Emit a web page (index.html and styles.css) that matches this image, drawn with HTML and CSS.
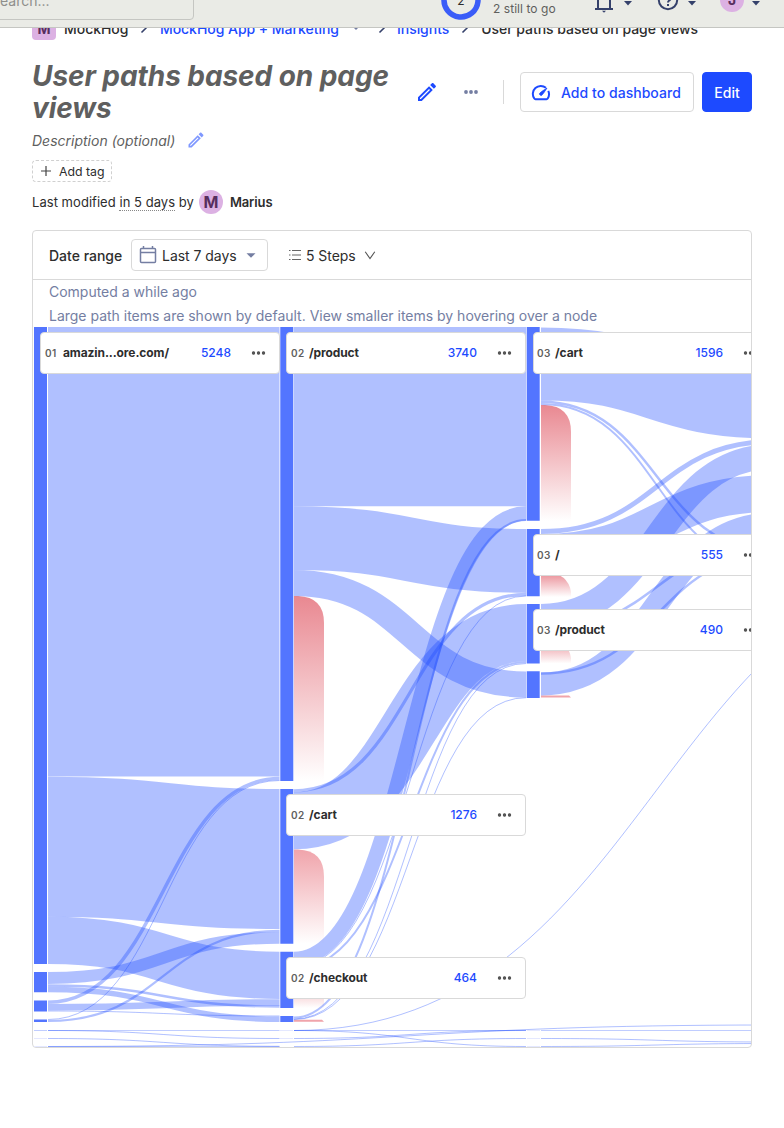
FILE: index.html
```html
<!DOCTYPE html>
<html lang="en">
<head>
<meta charset="utf-8">
<title>User paths based on page views</title>
<link rel="stylesheet" href="styles.css">
</head>
<body>
<header class="topbar">
  <div class="search">Search...</div>
  <div class="progress">
    <svg class="ring" width="40" height="40" viewBox="0 0 40 40"><circle cx="20" cy="20" r="17" fill="none" stroke="#3a5cf8" stroke-width="5.5" stroke-linecap="round" stroke-dasharray="80 27" transform="rotate(-84 20 20)"/><text x="20" y="24.5" text-anchor="middle" class="ring-num">2</text></svg>
    <div class="togo">2 still to go</div>
  </div>
  <div class="tools">
    <svg width="24" height="24" viewBox="0 0 24 24" fill="none" stroke="#35416b" stroke-width="2"><path d="M6 21V11a6 6 0 0 1 12 0v10M3 21h18"/><path d="M10 22.800h4l-2 2z" fill="#35416b" stroke="none"/></svg>
    <svg class="tick" width="10" height="6" viewBox="0 0 10 6"><path d="M1 0h8L5 4.500z" fill="#35416b"/></svg>
    <svg class="help" width="24" height="24" viewBox="0 0 24 24" fill="none" stroke="#35416b" stroke-width="2"><circle cx="12" cy="12" r="9.200"/><path d="M9.200 10a2.800 2.800 0 1 1 4.300 2.300c-1 .7-1.500 1.100-1.500 2.200M12 16v2"/></svg>
    <svg class="tick" width="10" height="6" viewBox="0 0 10 6"><path d="M1 0h8L5 4.500z" fill="#35416b"/></svg>
    <span class="avatar avatar-top">J</span>
    <svg class="tick" width="10" height="6" viewBox="0 0 10 6"><path d="M1 0h8L5 4.500z" fill="#35416b"/></svg>
  </div>
</header>
<main>
  <nav class="crumbs">
    <span class="lettermark">M</span><span class="c1">MockHog</span>
    <svg class="chev s1" width="8" height="12" viewBox="0 0 8 12"><path d="M1.500 1.500 6 6l-4.500 4.500" /></svg>
    <a class="c2">MockHog App + Marketing</a>
    <svg class="caret" width="8" height="5" viewBox="0 0 8 5"><path d="M0 0h8L4 4z" fill="#747ea2"/></svg>
    <svg class="chev s2" width="8" height="12" viewBox="0 0 8 12"><path d="M1.500 1.500 6 6l-4.500 4.500" /></svg>
    <a class="c3">Insights</a>
    <svg class="chev s3" width="8" height="12" viewBox="0 0 8 12"><path d="M1.500 1.500 6 6l-4.500 4.500" /></svg>
    <span class="c4">User paths based on page views</span>
  </nav>
  <div class="title-row">
    <h1>User paths based on page views</h1>
    <svg class="pencil" width="24" height="24" viewBox="0 0 24 24" fill="#1d4aff"><path d="M14.060 9.020l.92.920L5.920 19H5v-.920l9.060-9.060M17.660 3c-.250 0-.510.100-.700.290l-1.830 1.830 3.750 3.750 1.830-1.830c.390-.390.390-1.020 0-1.410l-2.340-2.340c-.200-.200-.450-.290-.710-.290zm-3.600 3.190L3 17.250V21h3.750L17.810 9.940l-3.750-3.750z"/></svg>
    <svg class="more" width="16" height="6" viewBox="0 0 16 6" fill="#747ea2"><circle cx="3" cy="3" r="1.900"/><circle cx="8" cy="3" r="1.900"/><circle cx="13" cy="3" r="1.900"/></svg>
    <span class="rule"></span>
    <button class="btn add"><svg width="20" height="20" viewBox="0 0 20 20" fill="none" stroke="#1d4aff" stroke-width="2"><path d="M14.900 4.700A8 8 0 0 0 3.300 15.500a1.500 1.500 0 0 0 1.200.7h11a1.500 1.500 0 0 0 1.200-.7 8 8 0 0 0 .6-7.600"/><path d="M8.600 11.400c-.7-.9.200-1.700 7.400-6.400-4.700 7.200-5.600 8.100-6.400 7.400z" fill="#1d4aff" stroke-width=".8"/></svg>Add to dashboard</button>
    <button class="btn edit">Edit</button>
  </div>
  <div class="desc">Description (optional)
    <svg width="20" height="20" viewBox="0 0 24 24" fill="#7f98ff"><path d="M14.060 9.020l.92.920L5.920 19H5v-.920l9.060-9.060M17.660 3c-.250 0-.510.100-.700.290l-1.830 1.830 3.750 3.750 1.830-1.830c.390-.390.390-1.020 0-1.410l-2.340-2.340c-.200-.200-.450-.290-.710-.290zm-3.600 3.190L3 17.250V21h3.750L17.810 9.940l-3.750-3.750z"/></svg>
  </div>
  <button class="tag"><svg width="10" height="10" viewBox="0 0 10 10" stroke="#444" stroke-width="1.200"><path d="M5 0v10M0 5h10"/></svg><span>Add tag</span></button>
  <div class="modified"><span>Last modified <span class="when">in 5 days</span> by</span><span class="avatar">M</span><b>Marius</b></div>

  <section class="card">
    <div class="filters">
      <span class="range-label">Date range</span>
      <button class="range"><svg width="18" height="18" viewBox="0 0 18 18" fill="none" stroke="#747ea2" stroke-width="1.500"><rect x="1.500" y="2.500" width="15" height="14" rx="1"/><path d="M1.500 6.500h15M4.500 0v2.500M13.500 0v2.500"/></svg><span>Last 7 days</span><svg class="down" width="10" height="5" viewBox="0 0 10 5"><path d="M.5.300h9L5 4.800z" fill="#747ea2"/></svg></button>
      <span class="steps"><svg width="12" height="12" viewBox="0 0 12 12" stroke="#666" stroke-width="1.100"><path d="M3 1.500h9M3 6h9M3 10.500h9M0 1.500h1.500M0 6h1.500M0 10.500h1.500"/></svg><span>5 Steps</span><svg class="open" width="12" height="9" viewBox="0 0 12 9" fill="none" stroke="#555" stroke-width="1.100"><path d="M1.200.8 6 7.500 10.800.8"/></svg></span>
    </div>
    <div class="note">Computed a while ago</div>
    <div class="note">Large path items are shown by default. View smaller items by hovering over a node</div>
    <div class="canvas">
      <svg class="sankey" width="718" height="720" viewBox="33 327 718 720">
        <defs>
          <linearGradient id="drop" x1="0" y1="0" x2="0" y2="1"><stop offset="0" stop-color="#e98891"/><stop offset="1" stop-color="#fff"/></linearGradient>
          <linearGradient id="soft" x1="0" y1="0" x2="0" y2="1"><stop offset="0" stop-color="#f0a4ab"/><stop offset="1" stop-color="#fff"/></linearGradient>
        </defs>
        <g fill="#5375ff">
          <path d="M34 327h13v637H34zM34 972h13v20.300H34zM34 1000.400h13v11.200H34zM34 1019.400h13v2.600H34z"/>
          <path d="M280.300 327h13v454h-13zM280.300 789h13v154.700h-13zM280.300 951.700h13v56.300h-13zM280.300 1016h13v6h-13z"/>
          <path d="M526.700 327h13v193.800h-13zM526.700 529h13v67.300h-13zM526.700 604h13v59.600h-13zM526.700 671.300h13v26.700h-13z"/>
        </g>
        <g fill="url(#drop)">
          <path d="M294 596h4q26 1 26 27v158h-30z"/>
          <path d="M294 849.500h4q26 1 26 27v67h-30z" fill="url(#soft)"/>
          <path d="M294 972h4q26 1 26 27v9h-30z"/>
          <path d="M541 405h4q26 1 26 27v89h-30z"/>
          <path d="M541 572h4q23 1 26 20v5h-30z"/>
          <path d="M541 638h4q23 1 26 20v5.500h-30z"/>
          <path d="M541 695.500h28l2 2h-30zM294 1019.700h28l2 2h-30z" fill="#f0a4ab"/>
        </g>
        <g fill="none" stroke="#1d4aff" stroke-opacity=".35">
          <path stroke-width="449.500" d="M48 551.750H279.500"/>
          <path stroke-width="140" d="M48 846.700C163.500 846.700 163.500 859 279.500 859"/>
          <path stroke-width="47.300" d="M48 940.300C163.500 940.300 163.500 975.300 279.500 975.300"/>
          <path stroke-width="11.800" d="M48 978C163.500 978 163.500 937.800 279.500 937.800"/>
          <path stroke-width="2.400" d="M48 985.500C163.500 985.500 163.500 1006.500 279.500 1006.500"/>
          <path stroke-width="5.500" d="M48 989.500C163.500 989.500 163.500 1019.200 279.500 1019.200"/>
          <path stroke-width="3.500" d="M48 1002.200C163.500 1002.200 163.500 778.500 279.500 778.500"/>
          <path stroke-width="6.500" d="M48 1007.300C163.500 1007.300 163.500 1002.500 279.500 1002.500"/>
          <path stroke-width="1" d="M48 1011C163.500 1011 163.500 1016 279.500 1016"/>
          <path stroke-width="1" d="M48 1019.500C163.500 1019.500 163.500 780.500 279.500 780.500"/>
          <path stroke-width="2.200" d="M48 1021C163.500 1021 163.500 930.800 279.500 930.800"/>
          <path stroke-width="179.300" d="M294 416.650H526"/>
          <path stroke-width="63.700" d="M294 538.200C410 538.200 410 560.800 526 560.800"/>
          <path stroke-width="26" d="M294 583C410 583 410 684.500 526 684.500"/>
          <path stroke-width="3.200" d="M294 790.800C410 790.800 410 594.300 526 594.300"/>
          <path stroke-width="57" d="M294 820.800C410 820.800 410 632.500 526 632.500"/>
          <path stroke-width="14.500" d="M294 959C410 959 410 513.600 526 513.600"/>
          <path stroke-width="1" d="M294 966.800C410 966.800 410 596 526 596"/>
          <path stroke-width="2" d="M294 969C410 969 410 662 526 662"/>
          <path stroke-width="2" d="M294 1017.500C410 1017.500 410 520 526 520"/>
          <path stroke-width="1" d="M294 1019C410 1019 410 663.500 526 663.500"/>
          <path stroke-width="1" d="M294 1019.500C410 1019.500 410 697.700 526 697.700"/>
          <path stroke-width="73" d="M541 364C657 364 657 402 773 402"/>
          <path stroke-width="2.500" d="M541 401.800C657 401.800 657 551 773 551"/>
          <path stroke-width="1.900" d="M541 404C657 404 657 567 773 567"/>
          <path stroke-width="4.800" d="M541 531.500C657 531.500 657 441.500 773 441.500"/>
          <path stroke-width="37" d="M541 552.500C657 552.500 657 493.500 773 493.500"/>
          <path stroke-width="25" d="M541 616.500C657 616.500 657 456.500 773 456.500"/>
          <path stroke-width="2.500" d="M541 630C657 630 657 543.500 773 543.500"/>
          <path stroke-width="23" d="M541 684C657 684 657 524 773 524"/>
          <path stroke-width="2.500" d="M541 673.500C657 673.500 657 555 773 555"/>
          <path stroke-width="1" d="M294 1030.500C656.500 1030.500 656.500 550 1019 550"/>
          <path stroke-width="1" stroke-opacity=".28" d="M48 1030.500H279.500M294 1030.500H526M541 1030.500H751M34 1030.500h13M48 1046.500H279.500"/>
          <path stroke-width="1" d="M48 1030.500C163.500 1030.500 163.500 1038.500 279.500 1038.500"/>
          <path stroke-width="1" d="M48 1038.500C163.500 1038.500 163.500 1046.300 279.500 1046.300"/>
          <path stroke-width="1" d="M294 1030.500C410 1030.500 410 1046.500 526 1046.500"/>
          <path stroke-width="1" d="M294 1038.500C410 1038.500 410 1030.500 526 1030.500"/>
          <path stroke-width="1" d="M294 1046.500C410 1046.500 410 1038.500 526 1038.500"/>
          <path stroke-width="1" d="M48 1046.500C410 1046.500 410 1025 773 1025"/>
          <path stroke-width="1" d="M541 1038.500C657 1038.500 657 1042 773 1042M541 1046.500C657 1046.500 657 1043.500 773 1043.500"/>
        </g>
        <path d="M34 1038.500h13M280 1030.500h13M280 1038.500h13M527 1030.500h13M527 1038.500h13M34 1046.500h13M527 1046.500h13" stroke="#e4e8ff"/>
      </svg>
      <div class="node n1"><i>01</i><b>amazin...ore.com/</b><em>5248</em><span class="dots"></span></div>
      <div class="node n2"><i>02</i><b>/product</b><em>3740</em><span class="dots"></span></div>
      <div class="node n3"><i>02</i><b>/cart</b><em>1276</em><span class="dots"></span></div>
      <div class="node n4"><i>02</i><b>/checkout</b><em>464</em><span class="dots"></span></div>
      <div class="node n5"><i>03</i><b>/cart</b><em>1596</em><span class="dots"></span></div>
      <div class="node n6"><i>03</i><b>/</b><em>555</em><span class="dots"></span></div>
      <div class="node n7"><i>03</i><b>/product</b><em>490</em><span class="dots"></span></div>
    </div>
  </section>
</main>
</body>
</html>
```
FILE: styles.css
```css
* { box-sizing: border-box; }
body { margin: 0; background: #fff; font-family: Inter, "Liberation Sans", sans-serif; font-size: 14px; line-height: 20px; color: #2d2d2d; height: 1128px; overflow: hidden; }
button { font: inherit; color: inherit; margin: 0; background: #fff; }

.topbar { height: 28px; background: #eaebe6; border-bottom: 1px solid #c5c6c2; overflow: hidden; position: relative; z-index: 2; display: flex; align-items: flex-end; }
.search { width: 204px; height: 40px; margin: 0 0 7px -10px; flex: none; border: 1px solid #c5c6c2; border-radius: 4px; color: #8f8f8c; line-height: 20px; padding: 10px 0 0 0; }
.progress { display: flex; align-items: flex-end; margin-left: 247px; width: 151px; flex: none; }
.ring { display: block; margin-bottom: 7px; }
.ring-num { font-size: 12px; fill: #2d2d2d; }
.togo { font-size: 12px; line-height: 16px; color: #5f5f5d; margin: 0 0 10px 12px; white-space: nowrap; letter-spacing: .05px; }
.tools { display: flex; align-items: flex-end; }
.tools svg { display: block; overflow: visible; margin-bottom: 15px; flex: none; }
.tools .tick { margin: 0 0 20px 7px; }
.tools .help { margin: 0 0 15px 23px; }

.avatar { width: 24px; height: 24px; border-radius: 50%; background: #dcb1e3; color: #572e5e; font-size: 16px; font-weight: 700; line-height: 24px; text-align: center; flex: none; }
.avatar-top { margin: 0 0 15px 23px; font-size: 14px; }

main { padding: 0 32px; }
.crumbs { display: flex; align-items: center; height: 24px; margin-top: -12px; font-weight: 500; white-space: nowrap; }
.crumbs a { color: #1d4aff; }
.lettermark { width: 24px; height: 24px; border-radius: 4px; background: #dcb1e3; color: #572e5e; font-size: 14px; font-weight: 700; line-height: 26px; text-align: center; margin-right: 8px; }
.c1, .c2, .c3, .c4 { padding-top: 2px; letter-spacing: -.04px; }
.chev { fill: none; stroke: #35416b; stroke-width: 1.6; }
.s1 { margin: 0 12px 0 11.5px; }
.caret { margin: 0 18px 0 13px; }
.s2 { margin-right: 11px; }
.s3 { margin: 0 12px 0 12px; }

.title-row { display: flex; align-items: center; margin-top: 20px; height: 64px; }
h1 { margin: 0; width: 360px; font-size: 28px; line-height: 32px; font-weight: 700; font-style: italic; color: #5f5f5f; letter-spacing: -.07px; flex: none; }
.pencil { margin-left: 23px; }
.more { margin-left: 24px; }
.rule { width: 1px; height: 24px; background: #d9d9d9; margin: 0 16px 0 24px; }
.btn { height: 40px; border: 1px solid #d9d9d9; border-radius: 4px; font-weight: 500; display: flex; align-items: center; white-space: nowrap; padding: 1px 0 0; flex: none; }
.add { width: 174px; color: #1d4aff; padding-left: 10px; gap: 10px; letter-spacing: .04px; }
.edit { width: 50px; margin-left: 8px; justify-content: center; background: #1d4aff; border-color: #1d4aff; color: #fff; }

.desc { display: flex; align-items: center; gap: 11px; height: 20px; margin-top: 7px; font-style: italic; color: #5f5f5f; }
.desc svg { margin-top: -2px; }
.tag { display: flex; align-items: center; gap: 8px; width: 80px; height: 22px; margin-top: 9px; padding: 0 0 0 8px; border: 1px dashed #d0d0d0; border-radius: 4px; font-size: 12.3px; white-space: nowrap; }
.tag span { padding-top: 2px; }
.modified { display: flex; align-items: center; height: 24px; margin-top: 8px; font-size: 13px; letter-spacing: .04px; }
.modified .avatar { margin: 0 7px 0 5px; }
.modified b { font-weight: 600; letter-spacing: -.12px; }
.when { border-bottom: 1px dotted #888; }

.card { border: 1px solid #d9d9d9; border-radius: 4px; height: 818px; margin-top: 16px; overflow: hidden; }
.filters { height: 49px; border-bottom: 1px solid #d9d9d9; display: flex; align-items: center; padding-left: 16px; }
.range-label { font-weight: 500; width: 82px; padding-top: 2px; }
.range { width: 137px; height: 32px; border: 1px solid #d9d9d9; border-radius: 4px; display: flex; align-items: center; padding: 0 0 0 7px; gap: 5px; white-space: nowrap; }
.range span, .steps span { padding-top: 2px; letter-spacing: -.04px; }
.down { margin-left: 4px; }
.steps { display: flex; align-items: center; margin-left: 21px; gap: 5px; }
.open { margin-left: 3px; }
.note { color: #747ea2; height: 24px; line-height: 24px; padding-left: 16px; white-space: nowrap; letter-spacing: -.01px; }

.canvas { position: relative; height: 720px; margin-top: -1px; }
.sankey { display: block; }
.node { position: absolute; width: 240px; height: 42px; background: #fff; border: 1px solid #d9d9d9; border-radius: 4px; display: flex; align-items: center; padding: 0 13px 0 4px; font-size: 12px; white-space: nowrap; }
.node i { font-style: normal; font-size: 10px; font-weight: 600; color: #5f5f5f; width: 18px; letter-spacing: .3px; }
.node b { font-weight: 700; flex: 1; letter-spacing: -.1px; }
.node em { font-style: normal; font-weight: 500; color: #1d4aff; margin-right: 20px; }
.dots { width: 15px; height: 4px; background: radial-gradient(circle, #555 1.3px, transparent 2.1px) 0 0 / 5px 4px repeat-x; }
.n1 { left: 7px; top: 5px; }
.n2 { left: 253px; top: 5px; }
.n3 { left: 253px; top: 467px; }
.n4 { left: 253px; top: 630px; }
.n5 { left: 500px; top: 5px; }
.n6 { left: 500px; top: 207px; }
.n7 { left: 500px; top: 282px; }
.n5, .n6, .n7 { padding-left: 3px; padding-right: 14px; }
```
